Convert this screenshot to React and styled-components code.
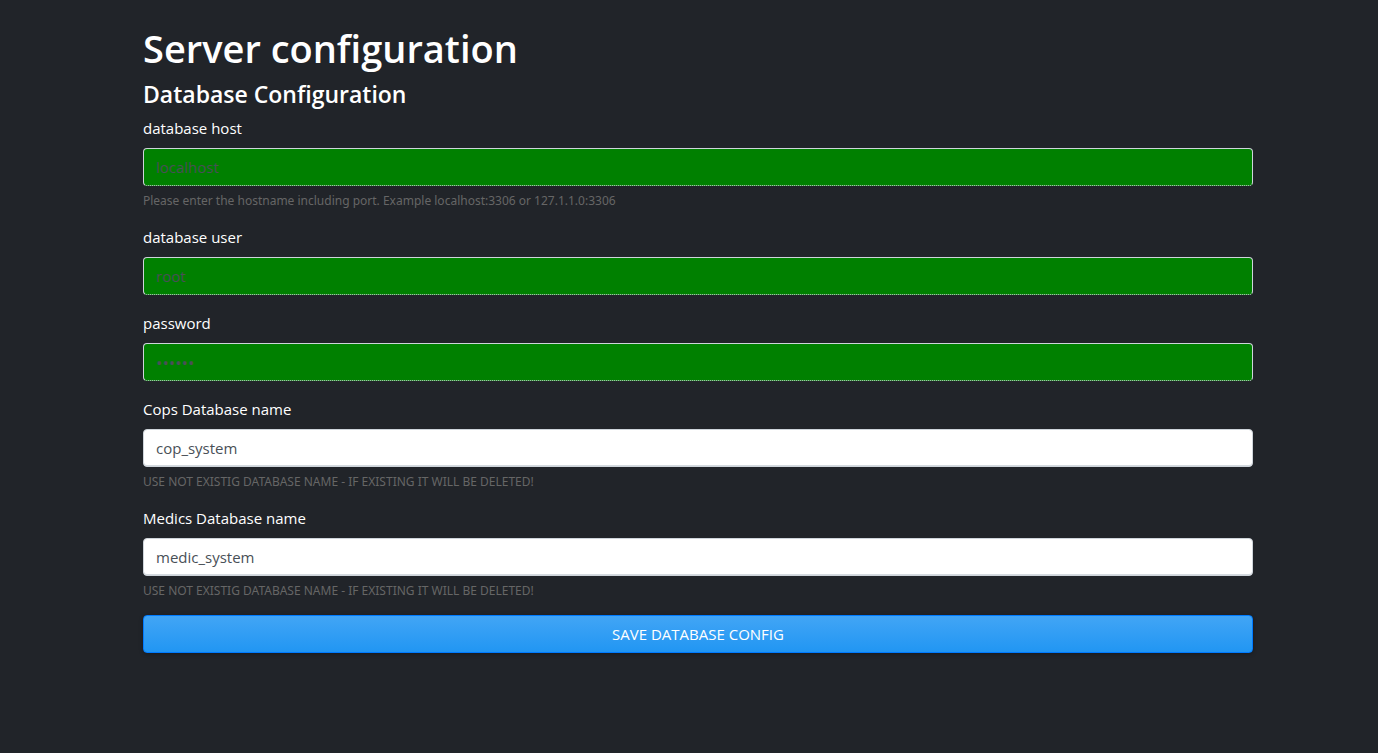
import React from "react";
import styled, { createGlobalStyle } from "styled-components";

const GlobalStyle = createGlobalStyle`
  *, *::before, *::after { box-sizing: border-box; }
  body {
    margin: 0;
    background: #212429;
    color: #fff;
    font-family: "Open Sans", "Noto Sans", sans-serif;
    font-size: 15px;
    line-height: 24px;
  }
`;

const Shell = styled.div`
  padding-left: 18px;
`;

const Page = styled.main`
  max-width: 1140px;
  margin: 0 auto;
  padding: 24px 15px;
`;

const Title = styled.h1`
  margin: 0 0 9px;
  font-size: 38px;
  font-weight: 600;
  line-height: 48px;
`;

const Subtitle = styled.h2`
  margin: 0 0 8px;
  font-size: 23px;
  font-weight: 600;
  line-height: 27px;
`;

const Group = styled.div`
  display: flex;
  flex-direction: column;
  margin-bottom: 16px;
`;

const Label = styled.label`
  margin-bottom: 8px;
`;

const Input = styled.input`
  width: 100%;
  height: 38px;
  padding: 6px 12px;
  border: 1px solid #ced4da;
  border-bottom-style: ${(p) => (p.$valid ? "dotted" : "solid")};
  border-radius: 4px;
  background: ${(p) => (p.$valid ? "#008000" : "#fff")};
  box-shadow: ${(p) => (p.$valid ? "none" : "inset 0 -1px 0 #d4dadf")};
  color: #495057;
  font: inherit;

  &[type="password"] {
    font-size: 17px;
  }
`;

const Help = styled.small`
  margin-top: 6px;
  font-family: "Noto Sans", sans-serif;
  font-size: 12px;
  line-height: 17px;
  color: #666;
`;

const SaveButton = styled.button`
  width: 100%;
  height: 38px;
  border: 1px solid #007bff;
  border-radius: 4px;
  background: linear-gradient(#42a5f5, #2196f3);
  box-shadow: 0 1px 4px rgba(0, 0, 0, 0.3);
  color: #fff;
  font: inherit;
  text-transform: uppercase;
`;

const FIELDS = [
  { id: "host", label: "database host", value: "localhost", valid: true, help: "Please enter the hostname including port. Example localhost:3306 or 127.1.1.0:3306" },
  { id: "user", label: "database user", value: "root", valid: true },
  { id: "password", label: "password", value: "secret", type: "password", valid: true },
  { id: "cops", label: "Cops Database name", value: "cop_system", help: "USE NOT EXISTIG DATABASE NAME - IF EXISTING IT WILL BE DELETED!" },
  { id: "medics", label: "Medics Database name", value: "medic_system", help: "USE NOT EXISTIG DATABASE NAME - IF EXISTING IT WILL BE DELETED!" },
];

function Field({ id, label, value, type = "text", valid, help }) {
  return (
    <Group>
      <Label htmlFor={id}>{label}</Label>
      <Input id={id} type={type} defaultValue={value} $valid={valid} />
      {help && <Help>{help}</Help>}
    </Group>
  );
}

export default function App() {
  return (
    <Shell>
      <GlobalStyle />
      <Page>
        <Title>Server configuration</Title>
        <Subtitle>Database Configuration</Subtitle>
        <form onSubmit={(e) => e.preventDefault()}>
          {FIELDS.map((field) => (
            <Field key={field.id} {...field} />
          ))}
          <SaveButton type="submit">Save database config</SaveButton>
        </form>
      </Page>
    </Shell>
  );
}
